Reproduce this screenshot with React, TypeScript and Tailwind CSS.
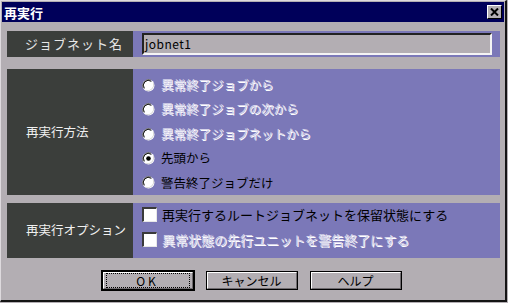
import React from "react";

const font = { fontFamily: '"Noto Sans CJK JP", "Noto Sans", sans-serif' };

function Radio({ checked }: { checked?: boolean }) {
  return (
    <svg width="13" height="13" viewBox="0 0 13 13" className="shrink-0">
      <circle cx="6.5" cy="6.5" r="6" fill="#ffffff" />
      <path d="M1.3 9.2 A6 6 0 0 1 9.2 1.3" stroke="#7a7a7a" strokeWidth="1.2" fill="none" />
      <path d="M2.4 9.4 A5 5 0 0 1 9.4 2.4" stroke="#1a1a1a" strokeWidth="1" fill="none" />
      <path d="M11.4 3.8 A6 6 0 0 1 3.8 11.4" stroke="#d8d8d8" strokeWidth="1" fill="none" />
      {checked && <circle cx="6.5" cy="6.5" r="2.3" fill="#000000" />}
    </svg>
  );
}

function Check() {
  return (
    <div className="w-[15px] h-[15px] bg-white border-t-2 border-l-2 border-t-[#3a3a3a] border-l-[#3a3a3a] border-b border-r border-b-[#e8e8e8] border-r-[#e8e8e8] shrink-0" />
  );
}

function Btn({ label, def }: { label: string; def?: boolean }) {
  return (
    <div
      className={`w-[92px] h-[19px] bg-[#b3aeb3] border border-black ${def ? "outline outline-1 outline-black" : ""}`}
    >
      <div className="h-full border-t border-l border-white border-b border-r border-b-[#6f6b6f] border-r-[#6f6b6f] flex items-center justify-center">
        <div
          className={`whitespace-nowrap leading-[13px] text-[12px] text-black text-center ${def ? "border border-dotted border-black w-[84px] tracking-[3px]" : ""}`}
        >
          {label}
        </div>
      </div>
    </div>
  );
}

const disabledText = "text-[#d6d4ea] [text-shadow:1px_1px_0_#ffffff]";

function Option({ text, enabled, checked }: { text: string; enabled?: boolean; checked?: boolean }) {
  return (
    <div className="flex items-center gap-[6px] h-[24.5px]">
      <Radio checked={checked} />
      <span className={`text-[12.5px] leading-none ${enabled ? "text-black" : disabledText}`}>{text}</span>
    </div>
  );
}

export default function App() {
  return (
    <div style={font} className="w-[508px] h-[303px] bg-[#b3aeb3] overflow-hidden">
      <div className="w-[507px] h-[302px] border-t border-l border-[#dedade] border-r-2 border-b-2 border-r-[#141414] border-b-[#141414] pt-[1px] pl-[1px] pr-[1px] flex flex-col">
        {/* title bar */}
        <div className="h-[20px] bg-[#00005a] flex items-center justify-between pl-[2px] pr-[2px]">
          <span className="text-white text-[13px] font-bold leading-none">再実行</span>
          <div className="w-[15px] h-[14px] bg-[#b3aeb3] border-t border-l border-white border-b border-r border-b-black border-r-black flex items-center justify-center">
            <svg width="9" height="8" viewBox="0 0 9 8">
              <path d="M1 0.5 L8 7.5 M8 0.5 L1 7.5" stroke="#000" strokeWidth="2" />
            </svg>
          </div>
        </div>

        <div className="pl-[5px] pr-[4px] pt-[9px] flex flex-col">
          {/* row 1 */}
          <div className="flex h-[26px]">
            <div className="w-[126px] bg-[#3b3e3b] text-[#e6e6e6] text-[13px] flex items-center pl-[18px] tracking-[1px]">
              ジョブネット名
            </div>
            <div className="flex-1 bg-[#7b78b8] pl-[9px] pr-[8px] py-[2px]">
              <div className="h-full bg-[#b3aeb3] border-t-2 border-l-2 border-t-[#222] border-l-[#222] border-b-2 border-r-2 border-b-[#f4f4f4] border-r-[#f4f4f4] flex items-center pl-[1px] text-[12px] text-black tracking-[0.5px]">
                jobnet1
              </div>
            </div>
          </div>

          {/* row 2 */}
          <div className="flex h-[126px] mt-[12px]">
            <div className="w-[126px] bg-[#3b3e3b] text-[#f0f0f0] text-[12.5px] flex items-center pl-[19px]">
              再実行方法
            </div>
            <div className="flex-1 bg-[#7b78b8] pl-[9px] pt-[4px] flex flex-col">
              <Option text="異常終了ジョブから" />
              <Option text="異常終了ジョブの次から" />
              <Option text="異常終了ジョブネットから" />
              <Option text="先頭から" enabled checked />
              <Option text="警告終了ジョブだけ" enabled />
            </div>
          </div>

          {/* row 3 */}
          <div className="flex h-[55px] mt-[8px]">
            <div className="w-[126px] bg-[#3b3e3b] text-[#f0f0f0] text-[12.5px] flex items-center pl-[19px]">
              再実行オプション
            </div>
            <div className="flex-1 bg-[#7b78b8] pl-[9px] pt-[4px] flex flex-col gap-[10px]">
              <div className="flex items-center gap-[5px]">
                <Check />
                <span className="text-[13px] leading-none text-black">再実行するルートジョブネットを保留状態にする</span>
              </div>
              <div className="flex items-center gap-[5px]">
                <Check />
                <span className={`text-[13px] leading-none ${disabledText}`}>
                  異常状態の先行ユニットを警告終了にする
                </span>
              </div>
            </div>
          </div>

          {/* buttons */}
          <div className="flex justify-center gap-[12px] mt-[13px] pr-[4px]">
            <Btn label="OK" def />
            <Btn label="キャンセル" />
            <Btn label="ヘルプ" />
          </div>
        </div>
      </div>
    </div>
  );
}
